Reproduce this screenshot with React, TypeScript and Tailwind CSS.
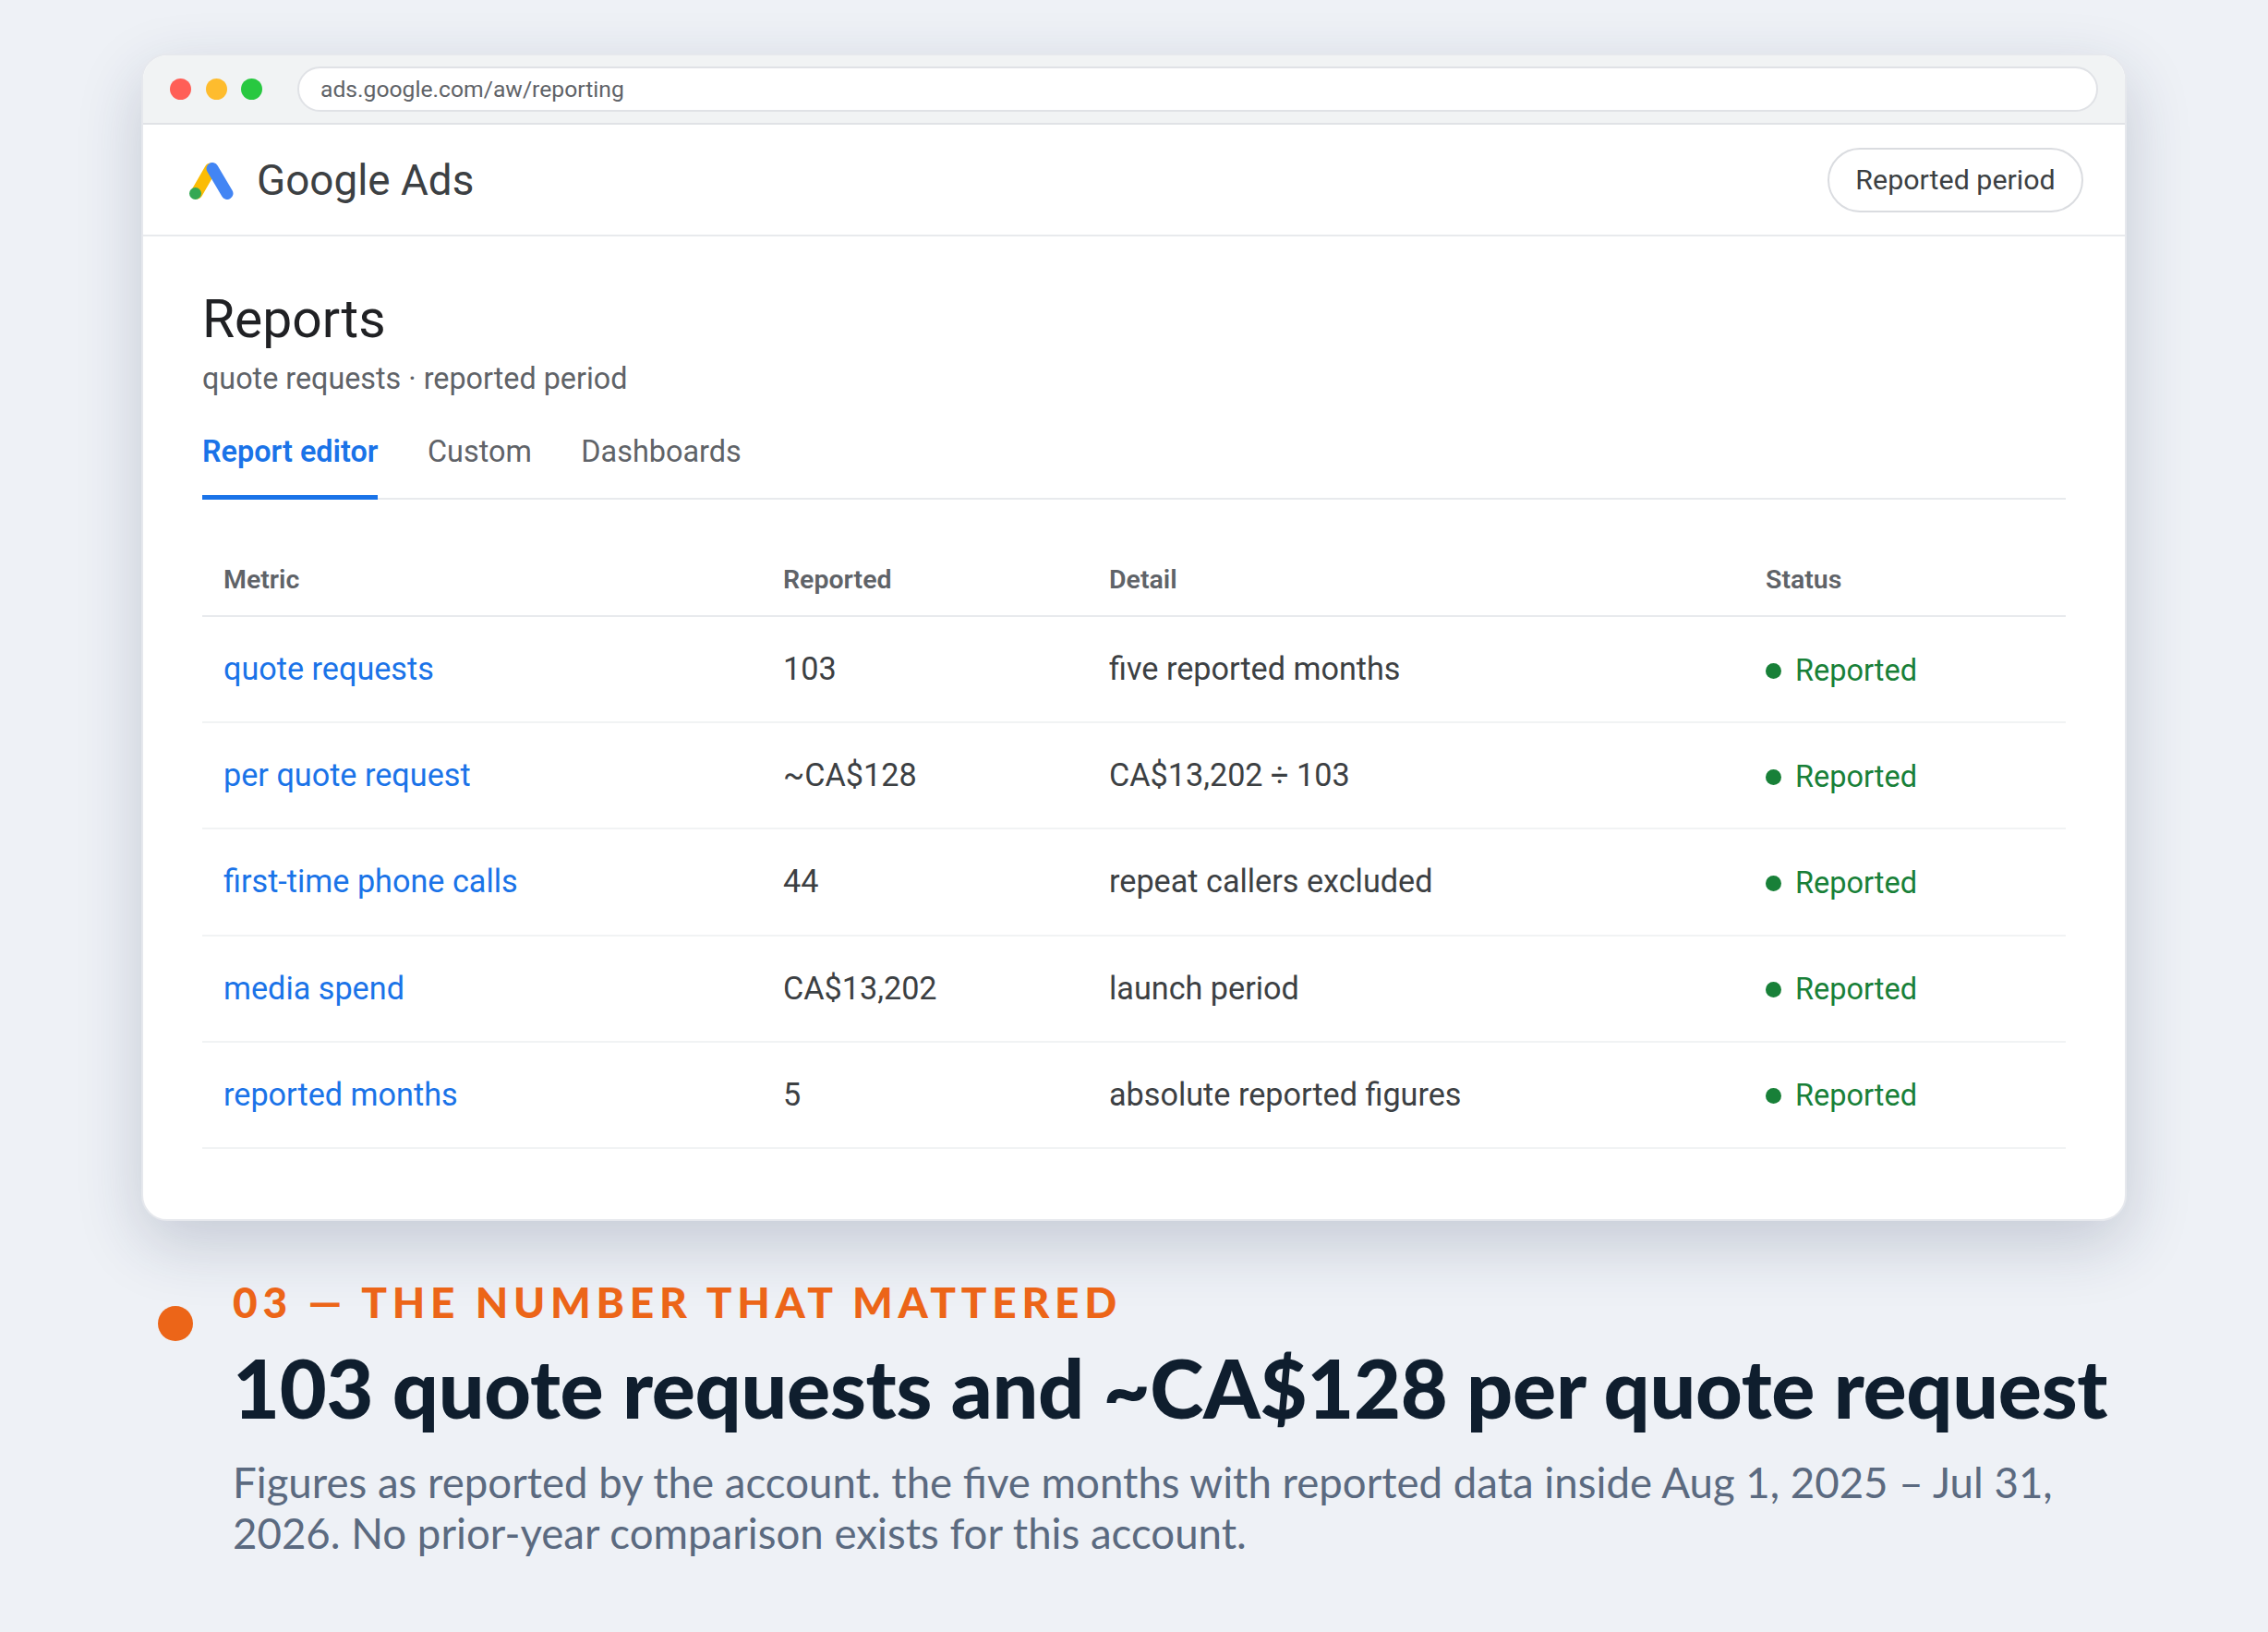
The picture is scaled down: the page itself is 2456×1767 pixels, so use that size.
const rows = [
  { metric: "quote requests", value: "103", detail: "five reported months" },
  { metric: "per quote request", value: "~CA$128", detail: "CA$13,202 ÷ 103" },
  { metric: "first-time phone calls", value: "44", detail: "repeat callers excluded" },
  { metric: "media spend", value: "CA$13,202", detail: "launch period" },
  { metric: "reported months", value: "5", detail: "absolute reported figures" },
];

const GoogleAdsLogo = () => (
  <svg width="48" height="40" viewBox="0 0 48 40" fill="none" className="mt-[3px]">
    <path d="M8 33 L23 7" stroke="#fbbc04" strokeWidth="13" strokeLinecap="round" />
    <path d="M25 6.5 L41 33.5" stroke="#4285f4" strokeWidth="13" strokeLinecap="round" />
    <circle cx="6.5" cy="33.5" r="6.5" fill="#34a853" />
  </svg>
);

const App = () => {
  return (
    <div className="w-[2456px] h-[1767px] overflow-hidden bg-[#eef1f6] pt-[58px] pl-[153px] font-['Roboto',sans-serif]">
      <div className="w-[2150px] h-[1264px] rounded-[28px] bg-white overflow-hidden shadow-[0_24px_70px_rgba(30,45,80,0.2)] border-2 border-[#e6e8ed]">
        <div className="h-[75px] bg-[#f1f3f4] border-b-2 border-[#e0e2e6] flex items-center pl-[29px] pr-[29px]">
          <div className="flex gap-[15.5px]">
            <span className="w-[23px] h-[23px] rounded-full bg-[#ff5f57]" />
            <span className="w-[23px] h-[23px] rounded-full bg-[#febc2e]" />
            <span className="w-[23px] h-[23px] rounded-full bg-[#28c840]" />
          </div>
          <div className="ml-[38px] flex-1 h-[49px] rounded-full bg-white border-2 border-[#e0e2e6] flex items-center pl-[23px] text-[24.7px] text-[#5f6368]">
            ads.google.com/aw/reporting
          </div>
        </div>

        <div className="h-[121px] border-b-2 border-[#e8eaed] flex items-center justify-between pl-[50px] pr-[45px]">
          <div className="flex items-center gap-[25px]">
            <GoogleAdsLogo />
            <span className="text-[45.8px] pt-[3px] text-[#3c4043]">Google Ads</span>
          </div>
          <div className="h-[70px] w-[277px] rounded-full border-2 border-[#dadce0] flex items-center justify-center text-[30.4px] text-[#3c4043]">
            Reported period
          </div>
        </div>

        <div className="pl-[64px] pr-[64px] pt-[55px]">
          <h1 className="text-[57px] leading-[70px] text-[#202124]">Reports</h1>
          <p className="mt-[7px] text-[32.3px] leading-[44px] text-[#5f6368]">quote requests · reported period</p>

          <div className="mt-[21px] flex gap-[53.5px] h-[88px] border-b-2 border-[#e8eaed] text-[32.4px]">
            <div className="h-[88px] border-b-[5px] border-[#1a73e8] font-semibold text-[#1a73e8] pt-[14px] leading-[44px]">Report editor</div>
            <div className="text-[#5f6368] pt-[14px] leading-[44px]">Custom</div>
            <div className="text-[#5f6368] pt-[14px] leading-[44px]">Dashboards</div>
          </div>

          <div className="mt-[44px]">
            <div className="grid grid-cols-[606px_353px_711px_1fr] h-[83px] pt-[6px] items-center border-b-2 border-[#e8eaed] text-[28.5px] font-semibold text-[#5f6368]">
              <div className="pl-[23px]">Metric</div>
              <div className="pl-[23px]">Reported</div>
              <div className="pl-[23px]">Detail</div>
              <div className="pl-[23px]">Status</div>
            </div>
            {rows.map((r) => (
              <div key={r.metric} className="grid grid-cols-[606px_353px_711px_1fr] h-[115.2px] items-center border-b-2 border-[#f1f3f4] text-[34.2px] text-[#3c4043]">
                <div className="pl-[23px] text-[#1a73e8]">{r.metric}</div>
                <div className="pl-[23px]">{r.value}</div>
                <div className="pl-[23px]">{r.detail}</div>
                <div className="pl-[23px] flex items-center gap-[15px] text-[32.5px] text-[#188038] pt-[3px]">
                  <span className="w-[17px] h-[17px] rounded-full bg-[#188038]" />
                  Reported
                </div>
              </div>
            ))}
          </div>
        </div>
      </div>

      <div className="mt-[60px] ml-[18px] flex font-['Lato',sans-serif]">
        <span className="mt-[32px] w-[38px] h-[38px] rounded-full bg-[#ec6518] shrink-0" />
        <div className="ml-[43px] w-[2060px]">
          <div className="text-[46px] leading-[56px] font-black tracking-[5.72px] text-[#ec6518]">03 — THE NUMBER THAT MATTERED</div>
          <h2 className="mt-[9px] text-[88px] leading-[110px] font-black tracking-[-0.3px] text-[#0f1e2e]">103 quote requests and ~CA$128 per quote request</h2>
          <p className="mt-[20px] w-[2010px] text-[45.6px] leading-[55px] text-[#5b6a80]">
            Figures as reported by the account. the five months with reported data inside Aug 1, 2025 – Jul 31, 2026. No prior-year comparison exists for this account.
          </p>
        </div>
      </div>
    </div>
  );
};

export default App;
